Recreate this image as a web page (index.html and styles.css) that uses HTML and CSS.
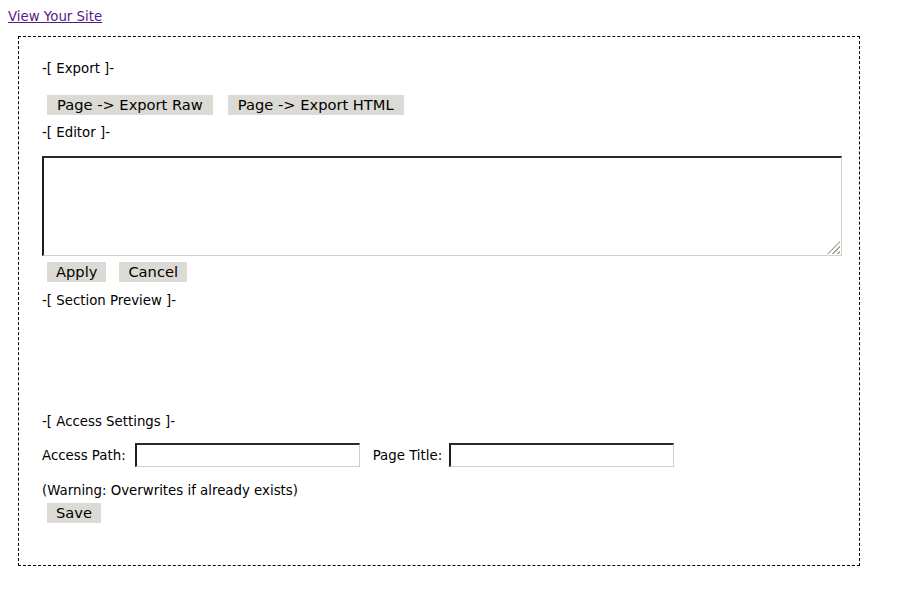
FILE: index.html
```html
<!DOCTYPE html>
<html>
<head>
<meta charset="utf-8">
<title>Editor</title>
<link rel="stylesheet" href="styles.css">
</head>
<body>
<div class="top"><a class="site-link" href="#">View Your Site</a></div>
<div class="panel">
  <div class="heading">-[ Export ]-</div>
  <div class="btn-row export-row">
    <button class="btn btn-wide">Page -&gt; Export Raw</button>
    <button class="btn btn-wide">Page -&gt; Export HTML</button>
  </div>
  <div class="heading editor-heading">-[ Editor ]-</div>
  <div class="editor-wrap">
    <textarea class="editor"></textarea>
  </div>
  <div class="btn-row apply-row">
    <button class="btn">Apply</button>
    <button class="btn">Cancel</button>
  </div>
  <div class="heading preview-heading">-[ Section Preview ]-</div>
  <div class="preview"></div>
  <div class="heading">-[ Access Settings ]-</div>
  <div class="field-row">
    <label class="label label-path">Access Path:</label>
    <input class="field field-path" type="text">
    <label class="label label-title">Page Title:</label>
    <input class="field" type="text">
  </div>
  <div class="warning">(Warning: Overwrites if already exists)</div>
  <div class="btn-row save-row">
    <button class="btn">Save</button>
  </div>
</div>
</body>
</html>
```

FILE: styles.css
```css
html, body {
  background: #ffffff;
}
body {
  margin: 8px;
  font-family: "DejaVu Sans", Verdana, sans-serif;
  font-size: 13.333px;
  line-height: 16px;
  color: #000000;
}
.top {
  height: 16px;
  padding-top: 1px;
}
.site-link {
  color: #551a8b;
  text-decoration: underline;
}
.panel {
  margin: 11px 0 0 10px;
  width: 800px;
  border: 1px dashed #000000;
  padding: 23px 17px 42px 23px;
}
.heading {
  height: 16px;
  padding-top: 1px;
}
.btn-row {
  display: flex;
  gap: 15px;
  margin-left: 5px;
}
.export-row {
  margin-top: 18px;
}
.apply-row {
  margin-top: 6px;
  gap: 13px;
}
.save-row {
  margin-top: 4px;
}
.btn {
  font-family: "DejaVu Sans", Verdana, sans-serif;
  font-size: 14.667px;
  line-height: 20px;
  height: 20px;
  padding: 0 9px;
  margin: 0;
  border: none;
  background: #dcdad5;
  color: #000000;
}
.btn-wide {
  padding: 0 10px;
}
.editor-heading {
  margin-top: 9px;
}
.editor-wrap {
  position: relative;
  margin-top: 15px;
  width: 800px;
  height: 100px;
}
.editor {
  display: block;
  box-sizing: border-box;
  width: 800px;
  height: 100px;
  margin: 0;
  padding: 2px;
  resize: none;
  border-style: solid;
  border-width: 2px 1px 1px 2px;
  border-color: #2a2a2a #d4d0c8 #d4d0c8 #1e1e1e;
  background: #ffffff;
  font-family: "DejaVu Sans Mono", monospace;
  font-size: 13px;
  outline: none;
}
.editor-wrap::after {
  content: "";
  position: absolute;
  right: 2px;
  bottom: 2px;
  width: 13px;
  height: 13px;
  background: repeating-linear-gradient(135deg, #ffffff 0 2px, #a6a39c 2px 3.4px);
  clip-path: polygon(100% 0, 100% 100%, 0 100%);
}
.preview-heading {
  margin-top: 10px;
}
.preview {
  height: 104px;
}
.field-row {
  display: flex;
  align-items: center;
  margin-top: 13px;
  height: 24px;
}
.label {
  white-space: nowrap;
  padding-top: 1px;
}
.label-path {
  margin-right: 9px;
}
.label-title {
  margin-right: 7px;
}
.field {
  box-sizing: border-box;
  width: 225px;
  height: 24px;
  margin: 0;
  padding: 1px 3px;
  border-style: solid;
  border-width: 2px 1px 1px 2px;
  border-color: #2a2a2a #d4d0c8 #d4d0c8 #1e1e1e;
  background: #ffffff;
  font-family: "DejaVu Sans", sans-serif;
  font-size: 13.333px;
  outline: none;
}
.field-path {
  margin-right: 13px;
}
.warning {
  margin-top: 15px;
  height: 16px;
  padding-top: 1px;
}
```
